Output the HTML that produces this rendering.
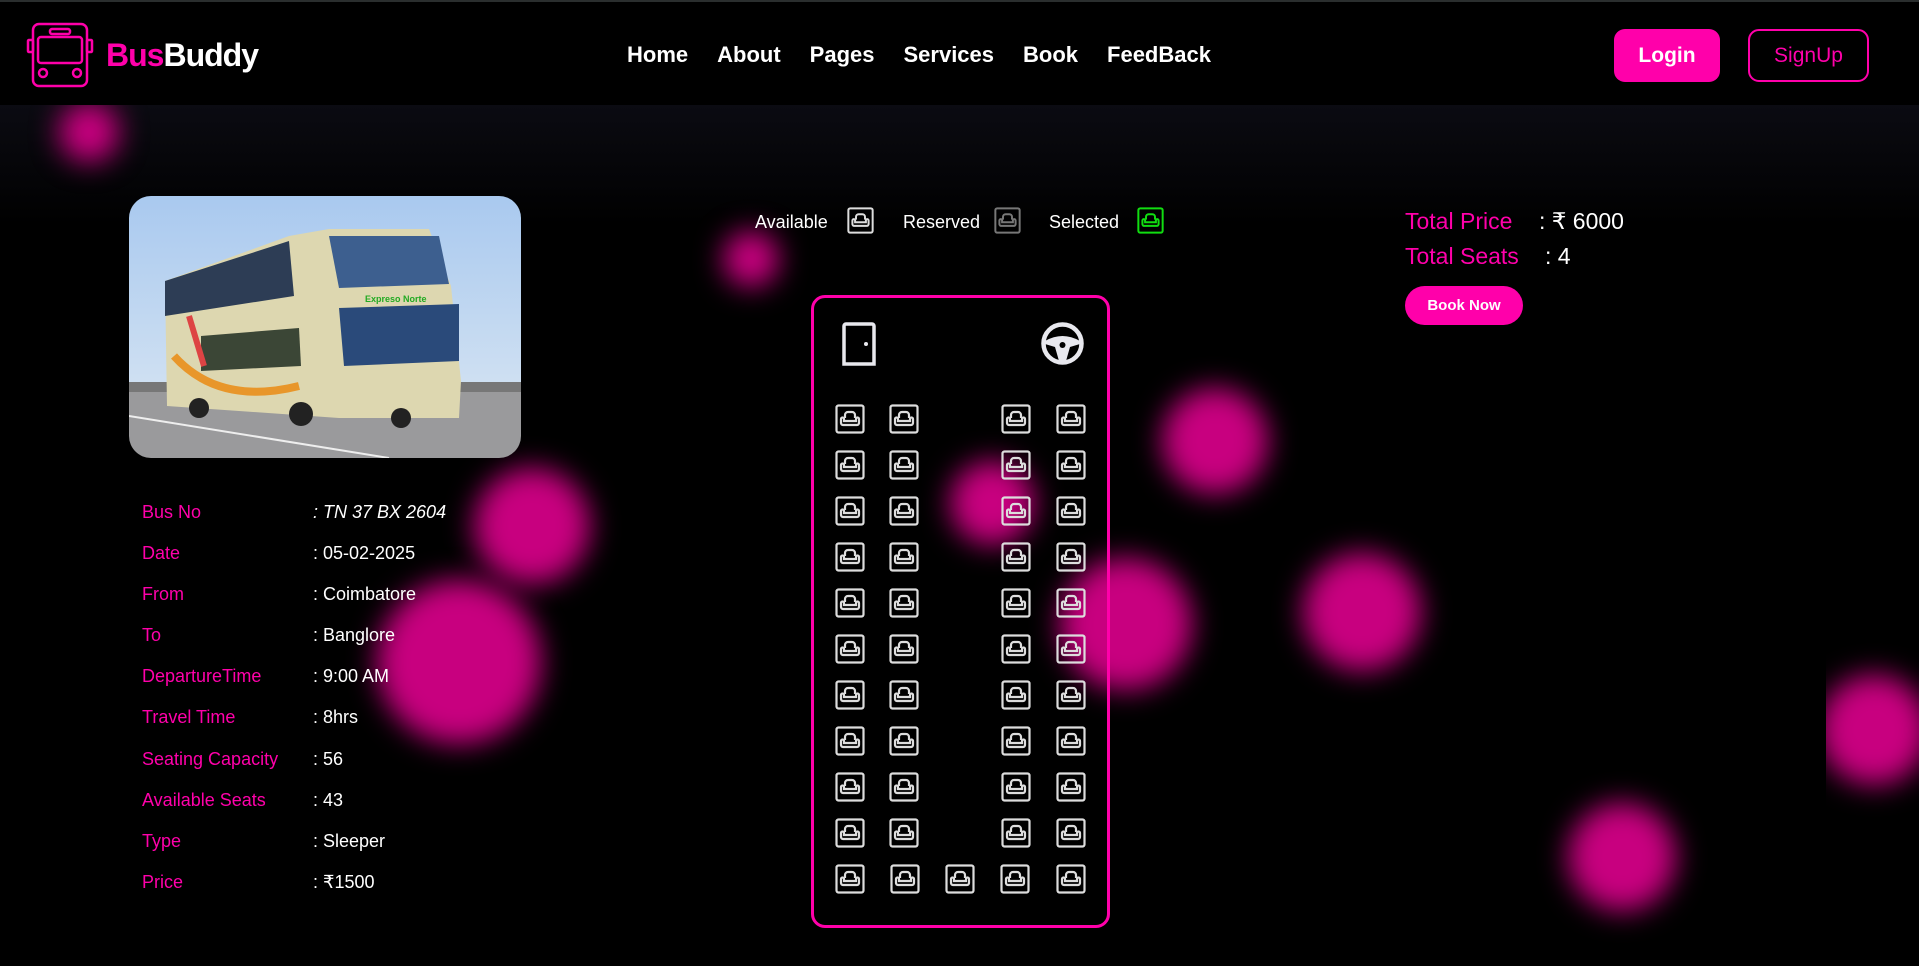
<!DOCTYPE html>
<html><head><meta charset="utf-8"><style>
*{margin:0;padding:0;box-sizing:border-box}
body{width:1919px;height:966px;background:#000;overflow:hidden;position:relative;font-family:"Liberation Sans",sans-serif;color:#fff}
.bg{position:absolute;left:0;top:105px;width:1919px;height:861px;background:linear-gradient(#0b0b12,#000 120px)}
.blob{position:absolute;border-radius:50%;background:#c8007f;filter:blur(14px)}
nav{position:absolute;left:0;top:0;width:1919px;height:105px;background:#000;border-top:2px solid #2a2e2e;z-index:5}
.logo{position:absolute;left:106px;top:35px;font-size:32px;font-weight:bold;letter-spacing:-1px}
.links{position:absolute;top:40px;left:627px;font-size:22px;font-weight:bold;white-space:nowrap}
.links span{margin-right:29px}
.btn{position:absolute;top:27px;height:53px;border-radius:11px;font-size:21px;display:flex;align-items:center;justify-content:center}
.pk{color:#ff00aa}
.det{position:absolute;left:142px;font-size:18px;white-space:nowrap}
.det div{height:41.1px;position:relative}
.det b{font-weight:normal;color:#ff00aa}
.det i{position:absolute;left:171px;top:0;font-style:normal;color:#fff;white-space:nowrap}
.seat{position:absolute;width:30px;height:30px}
.box{position:absolute;left:811px;top:295px;width:299px;height:633px;border:3px solid #ff00aa;border-radius:14px}
</style></head><body>
<div class="bg"></div>
<div class="blob" style="left:59px;top:102px;width:60px;height:60px"></div>
<div class="blob" style="left:723px;top:231px;width:56px;height:56px"></div>
<div class="blob" style="left:1162px;top:388px;width:106px;height:106px"></div>
<div class="blob" style="left:474px;top:468px;width:116px;height:116px"></div>
<div class="blob" style="left:377px;top:580px;width:164px;height:164px"></div>
<div class="blob" style="left:1060px;top:558px;width:132px;height:132px"></div>
<div class="blob" style="left:950px;top:461px;width:84px;height:84px"></div>
<div class="blob" style="left:1303px;top:553px;width:118px;height:118px"></div>
<div style="position:absolute;left:1826px;top:640px;width:93px;height:180px;overflow:hidden"><div class="blob" style="left:-7px;top:35px;width:110px;height:110px"></div></div>
<div class="blob" style="left:1568px;top:803px;width:108px;height:108px"></div>

<nav>
<svg style="position:absolute;left:26px;top:20px" width="68" height="68" viewBox="0 0 68 68" fill="none" stroke="#ff00aa" stroke-width="2.5"><rect x="7" y="2" width="54" height="62" rx="6"/><rect x="24" y="7" width="20" height="5" rx="2"/><rect x="12" y="15" width="44" height="26" rx="3"/><circle cx="17" cy="51" r="4"/><circle cx="51" cy="51" r="4"/><rect x="2" y="18" width="5" height="12" rx="1"/><rect x="61" y="18" width="5" height="12" rx="1"/></svg>
<div class="logo"><span class="pk">Bus</span>Buddy</div>
<div class="links"><span>Home</span><span>About</span><span>Pages</span><span>Services</span><span>Book</span><span>FeedBack</span></div>
<div class="btn" style="left:1614px;width:106px;background:#ff00aa;font-weight:bold">Login</div>
<div class="btn pk" style="left:1748px;width:121px;border:2px solid #ff00aa">SignUp</div>
</nav>

<div style="position:absolute;left:129px;top:196px;width:392px;height:262px;border-radius:22px;overflow:hidden">
<svg width="392" height="262" viewBox="0 0 392 262"><defs><linearGradient id="s" x1="0" y1="0" x2="0" y2="1"><stop offset="0" stop-color="#a9c9ef"/><stop offset="1" stop-color="#cfe0f2"/></linearGradient></defs>
<rect width="392" height="190" fill="url(#s)"/><rect y="186" width="392" height="10" fill="#777"/><rect y="196" width="392" height="66" fill="#9a9a9c"/>
<path d="M0 220 L260 262" stroke="#eee" stroke-width="2"/>
<path d="M36 85 L160 40 L200 33 L300 33 L322 90 L332 185 L330 222 L210 222 L110 215 L38 210 Z" fill="#ddd7b0"/>
<path d="M36 85 L160 45 L165 100 L36 120 Z" fill="#2d3d55"/>
<path d="M200 40 L310 40 L320 88 L210 92 Z" fill="#3d5f8f"/>
<path d="M210 112 L330 108 L330 165 L215 170 Z" fill="#2a4a7a"/>
<path d="M72 140 L170 132 L172 170 L72 175 Z" fill="#3b4636"/>
<path d="M45 160 Q90 210 170 190" stroke="#e8962a" stroke-width="8" fill="none"/>
<path d="M60 120 L75 170" stroke="#d44" stroke-width="6"/>
<text x="236" y="106" font-size="9" fill="#2a2" font-weight="bold">Expreso Norte</text>
<circle cx="70" cy="212" r="10" fill="#222"/><circle cx="172" cy="218" r="12" fill="#222"/><circle cx="272" cy="222" r="10" fill="#222"/>
</svg></div>

<div class="det" style="top:502px">
<div><b>Bus No</b><i style="font-style:italic">: TN 37 BX 2604</i></div>
<div><b>Date</b><i>: 05-02-2025</i></div>
<div><b>From</b><i>: Coimbatore</i></div>
<div><b>To</b><i>: Banglore</i></div>
<div><b>DepartureTime</b><i>: 9:00 AM</i></div>
<div><b>Travel Time</b><i>: 8hrs</i></div>
<div><b>Seating Capacity</b><i>: 56</i></div>
<div><b>Available Seats</b><i>: 43</i></div>
<div><b>Type</b><i>: Sleeper</i></div>
<div><b>Price</b><i>: ₹1500</i></div>
</div>

<div style="position:absolute;top:212px;left:755px;font-size:18px">Available</div>
<div style="position:absolute;top:212px;left:903px;font-size:18px">Reserved</div>
<div style="position:absolute;top:212px;left:1049px;font-size:18px">Selected</div>
<svg class="seat" style="left:847px;top:207px;width:27px;height:27px" viewBox="0 0 30 30" fill="none" stroke="#ddd" stroke-width="2.2"><rect x="1.5" y="1.5" width="27" height="27" rx="2"/><path d="M10 14v-3a3 3 0 0 1 3-3h4a3 3 0 0 1 3 3v3M8 21h14a2 2 0 0 0 2-2v-4a1.5 1.5 0 0 0-3 0v2H9v-2a1.5 1.5 0 0 0-3 0v4a2 2 0 0 0 2 2z"/></svg>
<svg class="seat" style="left:994px;top:207px;width:27px;height:27px" viewBox="0 0 30 30" fill="none" stroke="#777" stroke-width="2.2"><rect x="1.5" y="1.5" width="27" height="27" rx="2"/><path d="M10 14v-3a3 3 0 0 1 3-3h4a3 3 0 0 1 3 3v3M8 21h14a2 2 0 0 0 2-2v-4a1.5 1.5 0 0 0-3 0v2H9v-2a1.5 1.5 0 0 0-3 0v4a2 2 0 0 0 2 2z"/></svg>
<svg class="seat" style="left:1137px;top:207px;width:27px;height:27px" viewBox="0 0 30 30" fill="none" stroke="#11dd11" stroke-width="2.2"><rect x="1.5" y="1.5" width="27" height="27" rx="2"/><path d="M10 14v-3a3 3 0 0 1 3-3h4a3 3 0 0 1 3 3v3M8 21h14a2 2 0 0 0 2-2v-4a1.5 1.5 0 0 0-3 0v2H9v-2a1.5 1.5 0 0 0-3 0v4a2 2 0 0 0 2 2z"/></svg>

<div class="box"></div>
<svg style="position:absolute;left:841px;top:322px" width="36" height="44" viewBox="0 0 36 44" fill="none" stroke="#e8e8ee" stroke-width="3.5"><path d="M3 42V4a2 2 0 0 1 2-2h26a2 2 0 0 1 2 2v38z"/><circle cx="25" cy="22" r="2" fill="#e8e8ee" stroke="none"/></svg>
<svg style="position:absolute;left:1040px;top:321px" width="45" height="45" viewBox="0 0 45 45"><circle cx="22.5" cy="22.5" r="19" fill="none" stroke="#e8e8ee" stroke-width="4.5"/><path d="M5 20 Q22.5 10 40 20 L40 23 L30 26 L26 40 L19 40 L15 26 L5 23Z" fill="#e8e8ee"/><circle cx="22.5" cy="24" r="3" fill="#000"/></svg>

<div id="seats"></div>
<script>
var s='<svg class="seat" viewBox="0 0 30 30" fill="none" stroke="#ddd" stroke-width="2.2" style="left:XPX;top:YPX"><rect x="1.5" y="1.5" width="27" height="27" rx="2"/><path d="M10 14v-3a3 3 0 0 1 3-3h4a3 3 0 0 1 3 3v3M8 21h14a2 2 0 0 0 2-2v-4a1.5 1.5 0 0 0-3 0v2H9v-2a1.5 1.5 0 0 0-3 0v4a2 2 0 0 0 2 2z"/></svg>';
var h='',cols=[835,889,1001,1056];
for(var r=0;r<11;r++){var y=404+r*46;var cs=r==10?[835,890,945,1000,1056]:cols;for(var c=0;c<cs.length;c++)h+=s.replace('XPX',cs[c]+'px').replace('YPX',y+'px');}
document.getElementById('seats').innerHTML=h;
</script>

<div style="position:absolute;left:1405px;top:204px;font-size:23px;line-height:35px;white-space:nowrap">
<div><span class="pk" style="display:inline-block;width:134px">Total Price</span>: ₹ 6000</div>
<div><span class="pk" style="display:inline-block;width:140px">Total Seats</span>: 4</div>
</div>
<div style="position:absolute;left:1405px;top:286px;width:118px;height:39px;border-radius:20px;background:#ff00aa;font-size:15px;font-weight:bold;display:flex;align-items:center;justify-content:center">Book Now</div>
</body></html>
